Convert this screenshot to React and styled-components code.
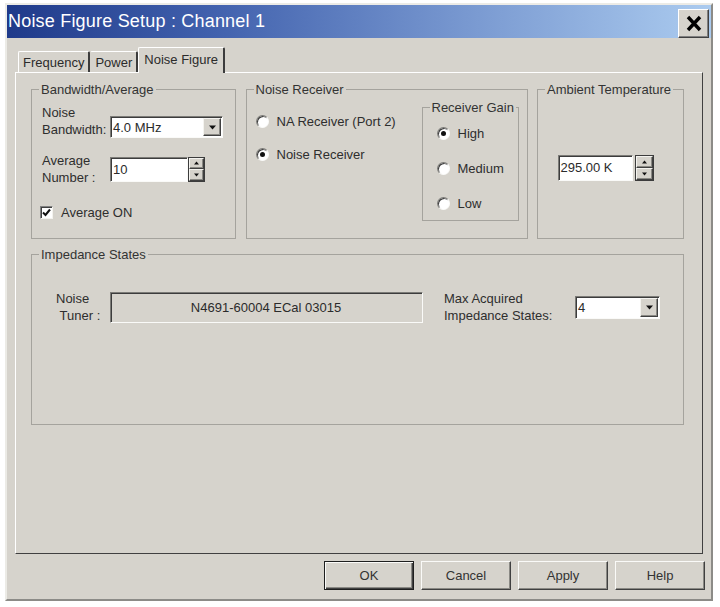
import React from 'react'
import styled, { createGlobalStyle } from 'styled-components'

const GlobalStyle = createGlobalStyle`
  body {
    margin: 0;
    background: #fff;
    font-family: "Liberation Sans", Arial, sans-serif;
  }
`

const Window = styled.div`
  box-sizing: border-box;
  margin: 3px 0 0 5px;
  width: 708px;
  height: 598px;
  background: #d6d3cc;
  border: 2px solid;
  border-color: #ecebe6 #8c8b87 #8c8b87 #ecebe6;
  display: flex;
  flex-direction: column;
`

const TitleBar = styled.div`
  height: 33px;
  flex: none;
  display: flex;
  align-items: center;
  justify-content: space-between;
  padding: 0 2px 0 1px;
  background: linear-gradient(90deg, #1f3a8a 0%, #4262ae 30%, #7898d0 65%, #abcbef 100%);
`

const Title = styled.span`
  color: #fff;
  font-size: 18px;
  letter-spacing: 0.2px;
`

const CloseButton = styled.div`
  box-sizing: border-box;
  width: 31px;
  height: 29px;
  margin-top: 3px;
  display: flex;
  align-items: center;
  justify-content: center;
  background: #d6d3cc;
  border: 1px solid;
  border-color: #fff #404040 #404040 #fff;
  box-shadow: inset -1px -1px 0 #808080;
`

const Body = styled.div`
  flex: 1;
  display: flex;
  flex-direction: column;
  padding: 9px 6px 0 8px;
`

const TabStrip = styled.div`
  height: 26px;
  margin-bottom: -1px;
  display: flex;
  align-items: flex-end;
  padding-left: 3px;
  position: relative;
  z-index: 1;
`

const Tab = styled.div`
  box-sizing: border-box;
  height: ${p => (p.$active ? 26 : 21)}px;
  margin-bottom: ${p => (p.$active ? 0 : 1)}px;
  padding: 0 ${p => (p.$active ? 5 : 4)}px ${p => (p.$active ? 3 : 0)}px;
  display: flex;
  align-items: center;
  font-size: 13px;
  color: #2b2b2b;
  background: #d6d3cc;
  border-top: 1px solid #fff;
  border-left: 1px solid ${p => (p.$first || p.$active ? '#fff' : '#d6d3cc')};
  border-right: 2px solid #3c3c3c;
  border-radius: 2px 2px 0 0;
`

const Panel = styled.div`
  box-sizing: border-box;
  height: 482px;
  margin-right: 2px;
  border: 1px solid;
  border-color: #fff #404040 #404040 #fff;
  padding: 9px 18px 0 15px;
  display: flex;
  flex-direction: column;
  gap: 8px;
`

const TopRow = styled.div`
  display: flex;
  justify-content: space-between;
`

const Group = styled.fieldset`
  box-sizing: border-box;
  margin: 0;
  min-width: 0;
  width: ${p => (p.$w ? `${p.$w}px` : 'auto')};
  height: ${p => p.$h}px;
  padding: 0;
  border: 1px solid #a5a39d;
`

const Legend = styled.legend`
  margin-left: 7px;
  padding: 0 2px;
  font-size: 13px;
  line-height: 15px;
  color: #333;
`

const Inner = styled.div`
  padding: ${p => p.$pad};
`

const Row = styled.div`
  display: flex;
  align-items: ${p => p.$align || 'center'};
  margin-top: ${p => p.$mt || 0}px;
`

const Label = styled.div`
  width: ${p => p.$w}px;
  flex: none;
  margin-left: ${p => p.$ml || 0}px;
  font-size: 13px;
  line-height: 17px;
  color: #2e2e2e;
`

const Sunken = styled.div`
  box-sizing: border-box;
  width: ${p => p.$w}px;
  height: ${p => p.$h}px;
  flex: none;
  display: flex;
  align-items: center;
  justify-content: ${p => (p.$center ? 'center' : 'space-between')};
  padding-left: ${p => (p.$center ? 0 : 2)}px;
  padding-right: 1px;
  background: ${p => (p.$gray ? '#d6d3cc' : '#fff')};
  border: 1px solid;
  border-color: #7c7b77 #fafaf8 #fafaf8 #7c7b77;
  box-shadow: inset 1px 1px 0 #3c3c3c;
  font-size: 13px;
  color: #2b2b2b;
`

const ArrowButton = styled.div`
  box-sizing: border-box;
  width: ${p => p.$w || 18}px;
  height: ${p => p.$h || 18}px;
  display: flex;
  align-items: center;
  justify-content: center;
  background: #d6d3cc;
  border: 1px solid;
  border-color: #f4f3ef #404040 #404040 #f4f3ef;
  box-shadow: inset -1px -1px 0 #8a8984;
`

const SpinWrap = styled.div`
  display: flex;
  align-items: center;
  gap: ${p => p.$gap}px;
`

const SpinButtons = styled.div`
  box-sizing: border-box;
  width: ${p => p.$w}px;
  height: ${p => p.$h}px;
  display: flex;
  flex-direction: column;
  border: 1px solid #3c3c3c;
  & > div {
    flex: 1;
    width: 100%;
    height: auto;
  }
`

const CheckRow = styled.label`
  display: flex;
  align-items: center;
  gap: 8px;
  margin: 19px 0 0 -2px;
  font-size: 13px;
  color: #2e2e2e;
`

const CheckBox = styled.span`
  box-sizing: border-box;
  width: 13px;
  height: 13px;
  display: flex;
  align-items: center;
  justify-content: center;
  background: #fff;
  border: 1px solid;
  border-color: #808080 #f4f3ef #f4f3ef #808080;
  box-shadow: inset 1px 1px 0 #404040;
`

const RadioList = styled.div`
  display: flex;
  flex-direction: column;
  gap: ${p => p.$gap}px;
  padding-top: ${p => p.$top}px;
  padding-left: ${p => p.$left || 0}px;
`

const RadioRow = styled.div`
  display: flex;
  align-items: center;
  gap: 8px;
  height: 16px;
  font-size: 13px;
  color: #2e2e2e;
`

const RadioDot = styled.span`
  box-sizing: border-box;
  width: 13px;
  height: 13px;
  border-radius: 50%;
  background: #fff;
  border: 1px solid;
  border-color: #7c7b77 #fafaf8 #fafaf8 #7c7b77;
  box-shadow: inset 1px 1px 0 #3c3c3c;
  display: flex;
  align-items: center;
  justify-content: center;
  &::after {
    content: '';
    width: 5px;
    height: 5px;
    border-radius: 50%;
    background: ${p => (p.$on ? '#111' : 'transparent')};
  }
`

const Split = styled.div`
  display: flex;
  justify-content: space-between;
  padding: 0 8px 0 9px;
`

const Centered = styled.div`
  height: 141px;
  display: flex;
  align-items: center;
  justify-content: center;
  padding-right: 10px;
`

const ButtonRow = styled.div`
  display: flex;
  justify-content: flex-end;
  gap: 7px;
  margin-top: 7px;
`

const Button = styled.div`
  box-sizing: border-box;
  width: 90px;
  height: 29px;
  display: flex;
  align-items: center;
  justify-content: center;
  font-size: 13px;
  color: #333;
  background: #d6d3cc;
  border: 1px solid;
  border-color: ${p => (p.$default ? '#1e1e1e' : '#fafaf8 #404040 #404040 #fafaf8')};
  box-shadow: ${p =>
    p.$default
      ? 'inset 1px 1px 0 #fafaf8, inset -1px -1px 0 #404040, inset -2px -2px 0 #8a8984'
      : 'inset -1px -1px 0 #8a8984'};
`

const Triangle = ({ up, size = 7 }) => (
  <svg width={size} height={Math.ceil(size / 2) + 1} viewBox="0 0 7 4">
    <polygon points={up ? '0,4 7,4 3.5,0' : '0,0 7,0 3.5,4'} fill="#111" />
  </svg>
)

const Dropdown = ({ w, h, value }) => (
  <Sunken $w={w} $h={h}>
    <span>{value}</span>
    <ArrowButton $w={18} $h={h - 4}>
      <Triangle />
    </ArrowButton>
  </Sunken>
)

const Spin = ({ w, h, bw, gap = 0, value }) => (
  <SpinWrap $gap={gap}>
    <Sunken $w={w} $h={h}>
      <span>{value}</span>
    </Sunken>
    <SpinButtons $w={bw} $h={h}>
      <ArrowButton><Triangle up size={5} /></ArrowButton>
      <ArrowButton><Triangle size={5} /></ArrowButton>
    </SpinButtons>
  </SpinWrap>
)

const Radio = ({ on, children }) => (
  <RadioRow>
    <RadioDot $on={on} />
    {children}
  </RadioRow>
)

export default function App() {
  return (
    <>
      <GlobalStyle />
      <Window>
        <TitleBar>
          <Title>Noise Figure Setup : Channel 1</Title>
          <CloseButton>
            <svg width="18" height="17" viewBox="0 0 18 17">
              <path d="M3 2 L15 15 M15 2 L3 15" stroke="#000" strokeWidth="3.4" />
            </svg>
          </CloseButton>
        </TitleBar>

        <Body>
          <TabStrip>
            <Tab $first>Frequency</Tab>
            <Tab>Power</Tab>
            <Tab $active>Noise Figure</Tab>
          </TabStrip>

          <Panel>
            <TopRow>
              <Group $w={205} $h={157}>
                <Legend>Bandwidth/Average</Legend>
                <Inner $pad="0 10px">
                  <Row $align="flex-end" $mt={7}>
                    <Label $w={68}>Noise<br />Bandwidth:</Label>
                    <Dropdown w={113} h={22} value="4.0 MHz" />
                  </Row>
                  <Row $mt={14}>
                    <Label $w={68}>Average<br />Number :</Label>
                    <Spin w={78} h={25} bw={17} value="10" />
                  </Row>
                  <CheckRow>
                    <CheckBox>
                      <svg width="9" height="9" viewBox="0 0 9 9">
                        <path d="M1 4.5 L3.5 7 L8 1.5" stroke="#111" strokeWidth="2" fill="none" />
                      </svg>
                    </CheckBox>
                    Average ON
                  </CheckRow>
                </Inner>
              </Group>

              <Group $w={282} $h={157}>
                <Legend>Noise Receiver</Legend>
                <Split>
                  <RadioList $top={16} $gap={17}>
                    <Radio>NA Receiver (Port 2)</Radio>
                    <Radio on>Noise Receiver</Radio>
                  </RadioList>
                  <Group $w={97} $h={121} style={{ marginTop: 3 }}>
                    <Legend>Receiver Gain</Legend>
                    <RadioList $top={10} $gap={19} $left={14}>
                      <Radio on>High</Radio>
                      <Radio>Medium</Radio>
                      <Radio>Low</Radio>
                    </RadioList>
                  </Group>
                </Split>
              </Group>

              <Group $w={147} $h={157}>
                <Legend>Ambient Temperature</Legend>
                <Centered>
                  <Spin w={75} h={26} bw={19} gap={2} value="295.00 K" />
                </Centered>
              </Group>
            </TopRow>

            <Group $h={178}>
              <Legend>Impedance States</Legend>
              <Inner $pad="28px 0 0 24px">
                <Row>
                  <Label $w={54}>Noise<br />&nbsp;Tuner :</Label>
                  <Sunken $w={313} $h={31} $gray $center>N4691-60004 ECal 03015</Sunken>
                  <Label $w={131} $ml={21}>Max Acquired<br />Impedance States:</Label>
                  <Dropdown w={85} h={23} value="4" />
                </Row>
              </Inner>
            </Group>
          </Panel>

          <ButtonRow>
            <Button $default>OK</Button>
            <Button>Cancel</Button>
            <Button>Apply</Button>
            <Button>Help</Button>
          </ButtonRow>
        </Body>
      </Window>
    </>
  )
}
